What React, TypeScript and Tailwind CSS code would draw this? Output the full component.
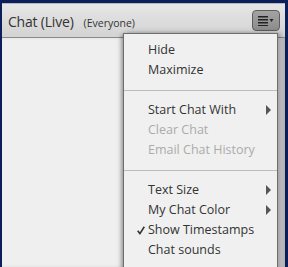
type Item = { label: string; disabled?: boolean; sub?: boolean; checked?: boolean } | "sep";

const items: Item[] = [
  { label: "Hide" },
  { label: "Maximize" },
  "sep",
  { label: "Start Chat With", sub: true },
  { label: "Clear Chat", disabled: true },
  { label: "Email Chat History", disabled: true },
  "sep",
  { label: "Text Size", sub: true },
  { label: "My Chat Color", sub: true },
  { label: "Show Timestamps", checked: true },
  { label: "Chat sounds" },
];

const MenuIcon = () => (
  <svg width="16" height="10" viewBox="0 0 16 10">
    <rect x="0" y="0" width="10" height="1.5" fill="#222" />
    <rect x="0" y="3" width="10" height="1.5" fill="#222" />
    <rect x="0" y="6" width="10" height="1.5" fill="#222" />
    <rect x="0" y="9" width="10" height="1" fill="#222" />
    <path d="M11.5 3 L15.5 3 L13.5 6 Z" fill="#222" />
  </svg>
);

const App = () => {
  return (
    <div
      className="w-[288px] h-[267px] overflow-hidden bg-[#0c1f5a] pt-[3px] pl-[2px] pr-[3px] relative"
      style={{ fontFamily: "'Open Sans', 'DejaVu Sans', sans-serif" }}
    >
      <div className="h-full flex flex-col bg-[#efefef]">
        {/* Header */}
        <div className="h-[35px] shrink-0 flex items-center justify-between pl-[6px] pr-[5px] bg-gradient-to-b from-[#e6e6e6] to-[#d3d3d3] border-t border-[#b8b8b8] border-b border-b-[#8a8a8a]">
          <div className="flex items-baseline gap-[10px] pt-[1px]">
            <span className="text-[14px] font-medium tracking-[-0.2px] text-[#333]">Chat (Live)</span>
            <span className="text-[10.5px] font-medium text-[#333]">(Everyone)</span>
          </div>
          <div className="w-[28px] h-[21px] rounded-[4px] border border-[#5e5e5e] bg-gradient-to-b from-[#a3a3a3] to-[#8c8c8c] flex items-center justify-center">
            <MenuIcon />
          </div>
        </div>
        {/* Body */}
        <div className="flex-1 shadow-[inset_-6px_0_6px_-4px_rgba(0,0,0,0.35)]" />
      </div>

      {/* Dropdown menu */}
      <div className="absolute left-[123px] top-[33px] w-[155px] h-[250px] bg-[#f0f0f0] border border-[#6e6e6e] shadow-[-2px_2px_4px_rgba(0,0,0,0.35),3px_0_5px_rgba(0,0,0,0.3)] pt-[6px]">
        {items.map((it, i) =>
          it === "sep" ? (
            <div key={i} className="h-[20px] flex items-center">
              <div className="w-full h-px bg-[#bdbdbd]" />
            </div>
          ) : (
            <div
              key={i}
              className={`h-[20px] flex items-center pl-[24px] pr-[5px] text-[12.5px] font-medium relative ${
                it.disabled ? "text-[#ababab]" : "text-[#333]"
              }`}
            >
              {it.checked && (
                <svg width="8" height="9" viewBox="0 0 8 9" className="absolute left-[13px] top-[6px]">
                  <path d="M0.7 4.8 L2.9 7.6 L7.3 0.8" fill="none" stroke="#333" strokeWidth="1.6" />
                </svg>
              )}
              <span className="flex-1">{it.label}</span>
              {it.sub && (
                <svg width="6" height="10" viewBox="0 0 6 10">
                  <path d="M0 0 L5 5 L0 10 Z" fill="#555" />
                </svg>
              )}
            </div>
          )
        )}
      </div>
    </div>
  );
};

export default App;
